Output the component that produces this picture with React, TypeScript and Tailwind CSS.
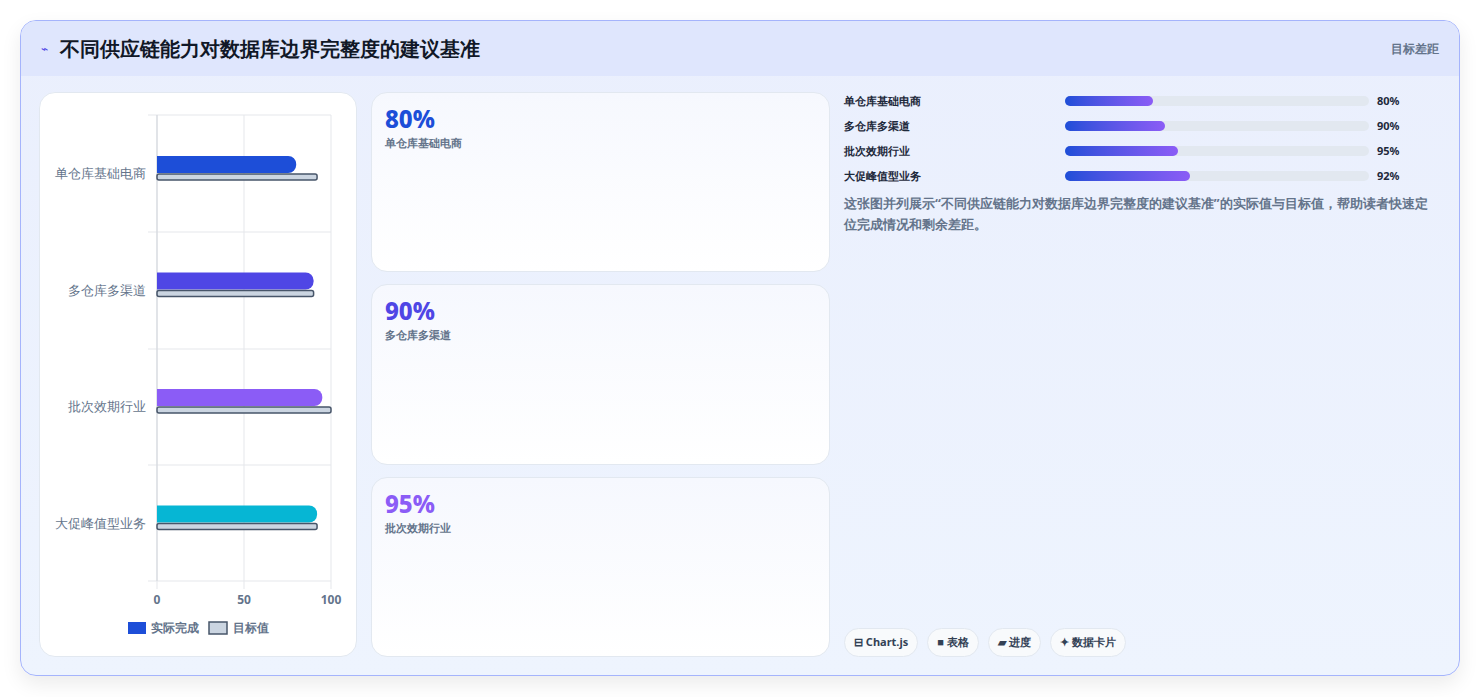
const rows = [
  { name: "单仓库基础电商", v: 80, t: 92, color: "#1d4ed8", pw: 88 },
  { name: "多仓库多渠道", v: 90, t: 90, color: "#4f46e5", pw: 100 },
  { name: "批次效期行业", v: 95, t: 100, color: "#8b5cf6", pw: 113 },
  { name: "大促峰值型业务", v: 92, t: 92, color: "#06b6d4", pw: 125 },
];

const cards = [
  { v: "80%", name: "单仓库基础电商", color: "text-[#1d4ed8]" },
  { v: "90%", name: "多仓库多渠道", color: "text-[#4f46e5]" },
  { v: "95%", name: "批次效期行业", color: "text-[#8b5cf6]" },
];

const font = "font-['Noto_Sans','Noto_Sans_CJK_SC',sans-serif]";

function Chart() {
  const x0 = 117;
  const w = 174;
  return (
    <svg width="317" height="563" className="block">
      {[22, 139, 256, 372, 488].map((y) => (
        <line key={y} x1={108} x2={291} y1={y} y2={y} stroke="#e5e7eb" />
      ))}
      {[0, 50, 100].map((p) => (
        <line key={p} x1={x0 + (w * p) / 100} x2={x0 + (w * p) / 100} y1={22} y2={496} stroke="#e5e7eb" />
      ))}
      <line x1={x0} x2={x0} y1={22} y2={488} stroke="#d1d5db" />
      {rows.map((r, i) => {
        const cy = 80 + i * 116.5;
        const bw = (w * r.v) / 100;
        const tw = (w * r.t) / 100;
        return (
          <g key={r.name}>
            <text x={106} y={cy + 5} textAnchor="end" fontSize="13" fill="#64748b">{r.name}</text>
            <path d={`M${x0} ${cy - 17} H${x0 + bw - 8} a8 8 0 0 1 8 8 v1 a8 8 0 0 1 -8 8 H${x0} Z`} fill={r.color} />
            <rect x={x0} y={cy + 1} width={tw} height={6} rx={2} fill="#cbd5e1" stroke="#475569" strokeWidth="1.5" />
          </g>
        );
      })}
      {[0, 50, 100].map((p) => (
        <text key={p} x={x0 + (w * p) / 100} y={511} textAnchor="middle" fontSize="12" fontWeight="700" fill="#64748b">{p}</text>
      ))}
      <rect x={88} y={529} width={18} height={12} fill="#1d4ed8" />
      <text x={111} y={539} fontSize="12" fontWeight="700" fill="#64748b">实际完成</text>
      <rect x={169} y={529} width={18} height={12} fill="#cbd5e1" stroke="#475569" strokeWidth="1.5" />
      <text x={193} y={539} fontSize="12" fontWeight="700" fill="#64748b">目标值</text>
    </svg>
  );
}

export default function App() {
  return (
    <div className={`w-[1480px] h-[697px] bg-white p-5 ${font}`}>
      <div className="h-[656px] rounded-2xl border border-[#a5b4fc] bg-gradient-to-b from-[#eaeffd] to-[#eef4fe] overflow-hidden flex flex-col shadow-[0_8px_20px_rgba(0,0,0,0.08)]">
        <div className="h-[55px] shrink-0 bg-[#dfe6fd] flex items-center justify-between px-5">
          <div className="flex items-center gap-3">
            <span className="text-[#4f46e5] text-xs">⌁</span>
            <h1 className="text-[20px] font-extrabold text-[#111827]">不同供应链能力对数据库边界完整度的建议基准</h1>
          </div>
          <span className="text-xs text-[#64748b] font-bold">目标差距</span>
        </div>
        <div className="flex-1 flex gap-[14px] pl-[18px] pr-5 pt-[16px] pb-[19px]">
          <div className="w-[318px] bg-white rounded-2xl border border-[#e2e8f0]">
            <Chart />
          </div>
          <div className="w-[459px] flex flex-col gap-3">
            {cards.map((c) => (
              <div key={c.v} className="flex-1 rounded-2xl border border-[#e2e8f0] bg-gradient-to-b from-[#f6f8fe] to-white px-[13px] pt-[10px]">
                <div className={`text-[24px] font-extrabold leading-8 ${c.color}`}>{c.v}</div>
                <div className="text-[11px] text-[#64748b] font-bold">{c.name}</div>
              </div>
            ))}
          </div>
          <div className="flex-1 flex flex-col">
            <div className="flex flex-col gap-[7px]">
              {rows.map((r) => (
                <div key={r.name} className="flex items-center h-[18px] text-[11px] font-bold text-[#1e293b]">
                  <span className="w-[221px]">{r.name}</span>
                  <div className="w-[304px] h-[10px] rounded-full bg-[#e2e8f0]">
                    <div className="h-full rounded-full bg-gradient-to-r from-[#1d4ed8] to-[#8b5cf6]" style={{ width: r.pw }} />
                  </div>
                  <span className="ml-[8px]">{r.v}%</span>
                </div>
              ))}
            </div>
            <p className="mt-[8px] text-[13px] leading-[21px] font-bold text-[#64748b]">
              这张图并列展示“不同供应链能力对数据库边界完整度的建议基准”的实际值与目标值，帮助读者快速定位完成情况和剩余差距。
            </p>
            <div className="mt-auto flex gap-[9px]">
              {["⊟ Chart.js", "■ 表格", "▰ 进度", "✦ 数据卡片"].map((t) => (
                <span key={t} className="h-[29px] px-[9px] flex items-center rounded-full bg-[#f8fafc] border border-[#e2e8f0] text-[11px] font-bold text-[#334155]">{t}</span>
              ))}
            </div>
          </div>
        </div>
      </div>
    </div>
  );
}
